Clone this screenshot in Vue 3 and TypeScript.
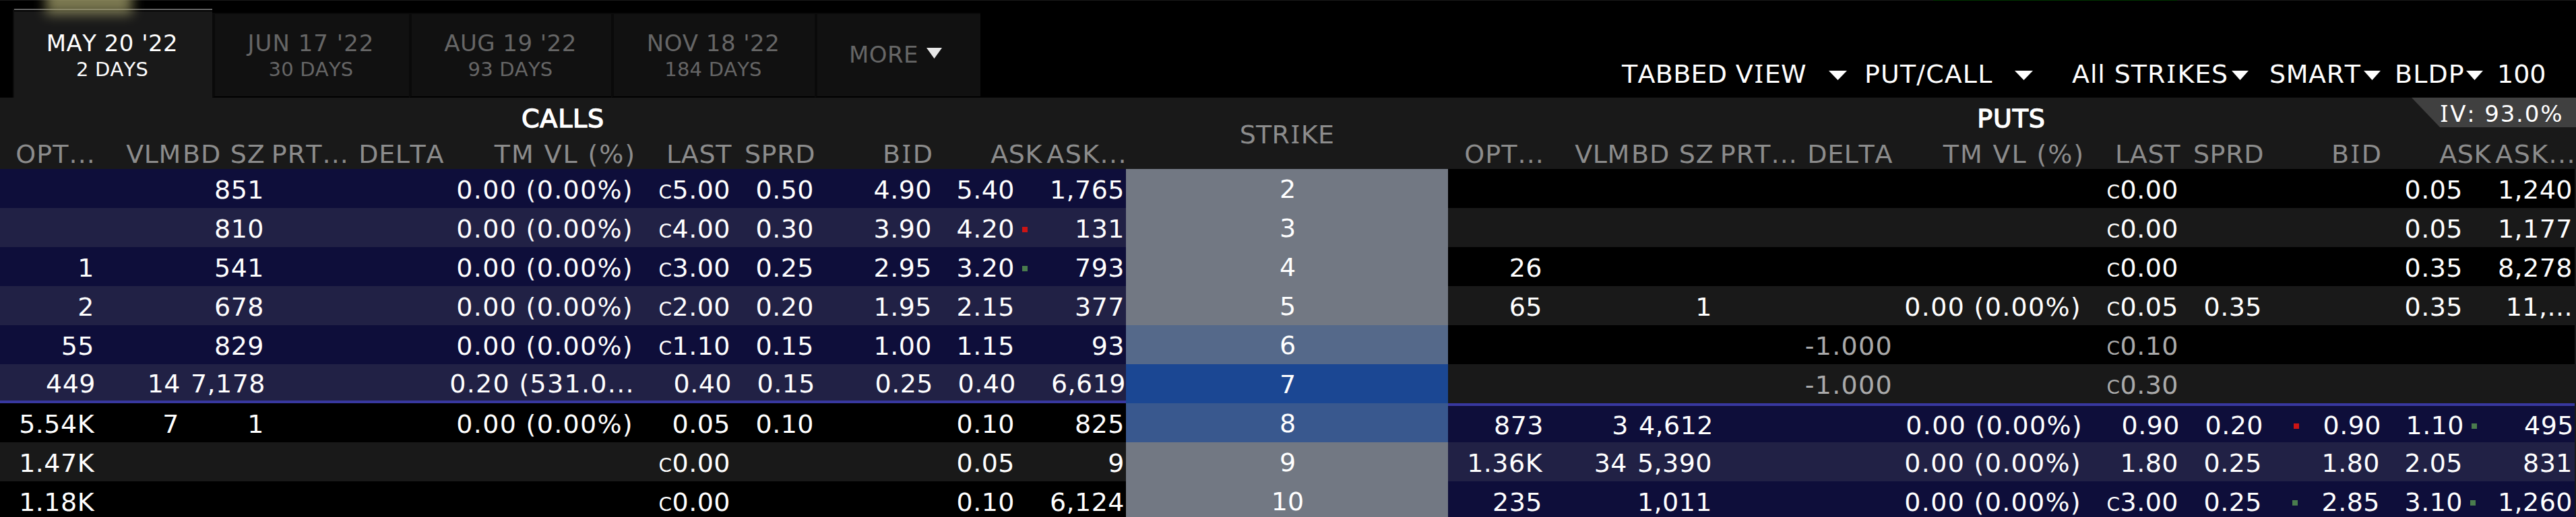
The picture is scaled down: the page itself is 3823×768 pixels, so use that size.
<script setup lang="ts">
import { h } from 'vue'

type Cells = string[]
interface Dot { col: number; color: 'red' | 'green' }
interface Side { cells: Cells; itm: boolean; edge?: 'top' | 'bottom'; dim?: boolean; dots?: Dot[] }
interface Row { strike: string; tone: string; call: Side; put: Side }

const columns = ['OPT...', 'VLM', 'BD SZ', 'PRT...', 'DELTA', 'TM VL (%)', 'LAST', 'SPRD', 'BID', 'ASK', 'ASK...']
const Z = '0.00 (0.00%)'

const tabs = [
  { date: "JUN 17 '22", days: '30 DAYS', cls: 'jun' },
  { date: "AUG 19 '22", days: '93 DAYS', cls: 'aug' },
  { date: "NOV 18 '22", days: '184 DAYS', cls: 'nov' },
]

// Cell order follows `columns`; a leading "c" marks a closing price.
const line = (s: string): Cells => s.split('|')
const rows: Row[] = [
  { strike: '2', tone: 'far', call: { itm: true, cells: line(`||851|||${Z}|c5.00|0.50|4.90|5.40|1,765`) }, put: { itm: false, cells: line('||||||c0.00|||0.05|1,240') } },
  { strike: '3', tone: 'far', call: { itm: true, cells: line(`||810|||${Z}|c4.00|0.30|3.90|4.20|131`), dots: [{ col: 10, color: 'red' }] }, put: { itm: false, cells: line('||||||c0.00|||0.05|1,177') } },
  { strike: '4', tone: 'far', call: { itm: true, cells: line(`1||541|||${Z}|c3.00|0.25|2.95|3.20|793`), dots: [{ col: 10, color: 'green' }] }, put: { itm: false, cells: line('26||||||c0.00|||0.35|8,278') } },
  { strike: '5', tone: 'far', call: { itm: true, cells: line(`2||678|||${Z}|c2.00|0.20|1.95|2.15|377`) }, put: { itm: false, cells: line(`65||1|||${Z}|c0.05|0.35||0.35|11,...`) } },
  { strike: '6', tone: 'near', call: { itm: true, cells: line(`55||829|||${Z}|c1.10|0.15|1.00|1.15|93`) }, put: { itm: false, dim: true, cells: line('||||-1.000||c0.10||||') } },
  { strike: '7', tone: 'money', call: { itm: true, edge: 'bottom', cells: line('449|14|7,178|||0.20 (531.0...|0.40|0.15|0.25|0.40|6,619') }, put: { itm: false, dim: true, cells: line('||||-1.000||c0.30||||') } },
  { strike: '8', tone: 'close', call: { itm: false, cells: line(`5.54K|7|1|||${Z}|0.05|0.10||0.10|825`) }, put: { itm: true, edge: 'top', cells: line(`873|3|4,612|||${Z}|0.90|0.20|0.90|1.10|495`), dots: [{ col: 8, color: 'red' }, { col: 10, color: 'green' }] } },
  { strike: '9', tone: 'far', call: { itm: false, cells: line('1.47K||||||c0.00|||0.05|9') }, put: { itm: true, cells: line(`1.36K|34|5,390|||${Z}|1.80|0.25|1.80|2.05|831`) } },
  { strike: '10', tone: 'far', call: { itm: false, cells: line('1.18K||||||c0.00|||0.10|6,124') }, put: { itm: true, cells: line(`235||1,011|||${Z}|c3.00|0.25|2.85|3.10|1,260`), dots: [{ col: 8, color: 'green' }, { col: 10, color: 'green' }] } },
]

const menus = [
  { label: 'TABBED VIEW', cls: 'm-view' },
  { label: 'PUT/CALL', cls: 'm-side' },
  { label: 'All STRIKES', cls: 'm-strikes' },
  { label: 'SMART', cls: 'm-route' },
  { label: 'BLDP', cls: 'm-model' },
]

// Renders a label with a slab capital I.
const Label = (props: { text: string }) =>
  h('span', { class: 'label' }, props.text.split(/(I)/).map((p) => (p === 'I' ? h('span', { class: 'slab' }, 'I') : p)))
Label.props = ['text']

const dotFor = (side: Side, col: number) => side.dots?.find((d) => d.col === col)?.color
</script>

<template>
  <div class="chain">
    <header class="top">
      <i class="hairline"></i>
      <div class="tabs">
        <div class="tab active">
          <b>MAY 20 '22</b><small>2 DAYS</small>
        </div>
        <div v-for="t in tabs" :key="t.date" class="tab" :class="t.cls">
          <b>{{ t.date }}</b><small>{{ t.days }}</small>
        </div>
        <div class="tab more">
          <b>MORE</b>
          <svg width="23" height="16" viewBox="0 0 24 16" preserveAspectRatio="none"><path d="M0 0H24L12 16Z" fill="#e8e8e8" /></svg>
        </div>
      </div>
      <i class="glow"></i>
      <div class="toolbar">
        <div v-for="m in menus" :key="m.label" class="menu" :class="m.cls">
          <Label :text="m.label" />
          <svg class="caret" viewBox="0 0 26 14" preserveAspectRatio="none"><path d="M0 0H26L13 14Z" fill="#fff" /></svg>
        </div>
        <span class="count">100</span>
      </div>
    </header>

    <section class="heads">
      <div class="head">
        <h2>CALLS</h2>
        <div class="cols"><span v-for="(c, i) in columns" :key="i" :class="'c' + i"><Label :text="c" /></span></div>
      </div>
      <div class="strike-head"><Label text="STRIKE" /></div>
      <div class="head puts">
        <h2>PUTS</h2>
        <div class="cols"><span v-for="(c, i) in columns" :key="i" :class="'c' + i"><Label :text="c" /></span></div>
      </div>
      <div class="iv"><Label text="IV: 93.0%" /></div>
    </section>

    <section class="body">
      <div v-for="(r, n) in rows" :key="r.strike" class="row" :class="{ odd: n % 2 === 1 }">
        <template v-for="kind in (['call', 'put'] as const)" :key="kind">
          <div v-if="kind === 'put'" class="strike" :class="r.tone">{{ r.strike }}</div>
          <div class="side cols" :class="[{ itm: r[kind].itm, dim: r[kind].dim }, r[kind].edge ? 'edge-' + r[kind].edge : '']">
            <span v-for="(v, i) in r[kind].cells" :key="i" :class="'c' + i">
              <i v-if="dotFor(r[kind], i)" class="dot" :class="dotFor(r[kind], i)"></i>
              <template v-if="v[0] === 'c'"><em>C</em>{{ v.slice(1) }}</template>
              <template v-else>{{ v }}</template>
            </span>
          </div>
        </template>
      </div>
    </section>
  </div>
</template>

<style>
body { margin: 0; background: #000; }
.label { white-space: pre; }
.slab { font-family: "Noto Sans", sans-serif; font-size: 1.02em; line-height: 0; margin: 0 0.04em; }
</style>

<style scoped>
.chain { width: 3823px; height: 768px; overflow: hidden; background: #000; color: #fff; font: 38px "DejaVu Sans", Verdana, sans-serif; font-kerning: none; white-space: nowrap; }

.top { position: relative; height: 145px; display: flex; justify-content: space-between; align-items: flex-end; }
.hairline { position: absolute; left: 0; top: 0; width: 100%; height: 1px; background: linear-gradient(90deg, #191919 2869px, #003500 2869px 3231px, #191919 3231px); }
.glow { position: absolute; left: 68px; top: -22px; width: 128px; height: 43px; background: #a5a16c; opacity: .75; filter: blur(9px); }

.tabs { display: flex; align-items: flex-end; }
.tab { box-sizing: border-box; height: 126px; border: solid #0a0a0a; border-width: 2px 0 0 4px; border-bottom: 2px solid #000; background: #111; color: #666; padding: 24px 3px 0 0; text-align: center; width: 292px; }
.tab b, .tab small { display: block; font-weight: 400; }
.tab b { font-size: 34px; line-height: 39px; letter-spacing: .45px; }
.tab small { font-size: 29px; line-height: 38px; letter-spacing: .2px; }
.active { width: 296px; height: 132px; margin-left: 19px; border: 0; border-left: 2px solid #0d0d0d; background: linear-gradient(#666 2px, #000 2px 4px, #191919 4px); color: #fff; padding: 32px 3px 0 0; }
.tab.jun b { letter-spacing: 1px; }
.tab.aug { width: 300px; }
.tab.nov { width: 302px; }
.tab.more { width: 246px; display: flex; gap: 12px; padding: 41px 0 0 47px; }
.more svg { margin-top: 9px; }

.toolbar { display: flex; align-items: center; height: 70px; line-height: 61px; }
.menu { display: flex; align-items: center; justify-content: space-between; }
.caret { width: 25px; height: 14px; margin-top: 4px; }
.m-view { width: 334px; margin-right: 26px; letter-spacing: .3px; }
.m-side { width: 250px; margin-right: 58px; letter-spacing: 1.1px; }
.m-view .caret, .m-side .caret { width: 27px; }
.m-strikes { width: 262px; margin-right: 31px; letter-spacing: .9px; }
.m-route { width: 165px; margin-right: 21px; letter-spacing: .6px; }
.m-model { width: 131px; margin-right: 21px; letter-spacing: 1.1px; }
.count { width: 117px; }

.heads { position: relative; height: 106px; background: #191919; display: grid; grid-template-columns: 1671px 478px 1672px; color: #8c8c8c; }
h2 { margin: 0; padding-top: 9px; height: 50px; box-sizing: border-box; font-size: 38px; line-height: 44px; font-weight: 400; letter-spacing: .8px; color: #fff; text-align: center; -webkit-text-stroke: 1.4px #fff; }
.strike-head { text-align: center; line-height: 110px; letter-spacing: .3px; }
.iv { position: absolute; right: 0; top: 0; width: 244px; height: 44px; box-sizing: border-box; padding-left: 41px; background: #404040; clip-path: polygon(0 0, 100% 0, 100% 100%, 42px 100%); color: #fff; font-size: 34px; line-height: 49px; letter-spacing: 1.8px; }

.cols { display: grid; grid-template-columns: 140px 126px 126px 126px 143px 279px 144px 124px 175px 123px 163px; text-align: right; }
.cols > span { display: flex; justify-content: flex-end; align-items: center; min-width: 0; }
.head .cols { height: 56px; line-height: 56px; padding-top: 6px; box-sizing: border-box; grid-template-columns: 142px 127px 125px 124px 141px 285px 142px 124px 175px 162px 126px; grid-template-rows: 56px; letter-spacing: .6px; }
.head.puts .cols { padding-left: 1px; }
.head .c0, .head .c2, .head .c3, .head .c8 { letter-spacing: 1.1px; }
.head .c5 { letter-spacing: 1.9px; }
.head .c10 { letter-spacing: 1.4px; }

.body { background: #191919; }
.row { height: 58px; display: grid; grid-template-columns: 1671px 478px 1672px; }
.side { box-sizing: border-box; height: 58px; background: #000; letter-spacing: .45px; }
.side > span { padding-top: 4px; }
.side .c4 { letter-spacing: 1.3px; margin-right: 1px; }
.side .c5 { letter-spacing: 1.3px; }
.odd .side { background: #191919; }
.side.itm { background: #0e0e3a; }
.odd .side.itm { background: #212145; }
.dim { color: #aaa; }
.edge-bottom { border-bottom: 4px solid #3838a0; padding-left: 2px; }
.edge-top { border-top: 4px solid #3838a0; padding-left: 2px; }
.strike { box-sizing: border-box; padding-left: 2px; text-align: center; line-height: 60px; background: #727883; }
.strike.near { background: #55698a; }
.strike.money { background: #1b4793; }
.strike.close { background: #39588e; }
em { font-style: normal; font-size: 28px; padding-top: 7px; }
.dot { width: 8px; height: 8px; margin: 1px auto 0 11px; }
.c8 .dot { margin-left: 45px; }
.dot.red { background: #cc1414; }
.dot.green { background: #4a7c4d; }
</style>
